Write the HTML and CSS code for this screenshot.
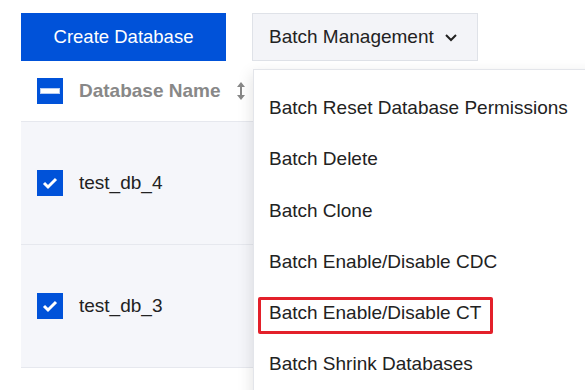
FILE: index.html
```html
<!DOCTYPE html>
<html lang="en">
<head>
  <meta charset="UTF-8">
  <title>Databases</title>
  <link rel="stylesheet" href="styles.css">
</head>
<body>
  <div class="toolbar">
    <button class="btn primary">Create Database</button>
    <button class="btn plain">Batch Management
      <svg class="chev" width="14" height="9" viewBox="0 0 14 9"><path d="M2 2l5 5 5-5" fill="none" stroke="#222" stroke-width="2"/></svg>
    </button>
  </div>

  <div class="table">
    <div class="row head">
      <span class="cb mixed"><i></i></span>
      <span class="col-name">Database Name</span>
      <svg class="sort" width="10" height="20" viewBox="0 0 10 20"><path d="M5 1l4 5H1z M5 19l4-5H1z" fill="#888"/><rect x="4" y="5" width="2" height="10" fill="#888"/></svg>
    </div>
    <div class="row sel">
      <span class="cb checked"><svg width="18" height="18" viewBox="0 0 18 18"><path d="M3 9l4 4 8-8" fill="none" stroke="#fff" stroke-width="3"/></svg></span>
      <span class="db">test_db_4</span>
    </div>
    <div class="row sel">
      <span class="cb checked"><svg width="18" height="18" viewBox="0 0 18 18"><path d="M3 9l4 4 8-8" fill="none" stroke="#fff" stroke-width="3"/></svg></span>
      <span class="db">test_db_3</span>
    </div>
  </div>

  <!-- Batch menu -->
  <ul class="menu">
    <li>Batch Reset Database Permissions</li>
    <li>Batch Delete</li>
    <li>Batch Clone</li>
    <li>Batch Enable/Disable CDC</li>
    <li><span class="mark">Batch Enable/Disable CT</span></li>
    <li>Batch Shrink Databases</li>
  </ul>
</body>
</html>
```

FILE: styles.css
```css
* { margin:0; padding:0; box-sizing:border-box; }
body { font-family: 'Liberation Sans', Arial, sans-serif; background:#fff; color:#222; width:585px; height:390px; overflow:hidden; position:relative; }
.toolbar { display:flex; gap:26px; padding:13px 0 0 21px; }
.btn { height:48px; font-family:inherit; font-size:19px; border:none; cursor:pointer; display:flex; align-items:center; }
.btn.primary { width:205px; justify-content:center; background:#0052d9; color:#fff; font-size:18.5px; }
.btn.plain { width:226px; padding-left:16px; gap:10px; background:#f3f4f8; border:1px solid #dfe2e8; color:#222; }
.chev { margin-top:1px; }
/* Table */
.table { margin-left:21px; }
.row { display:flex; align-items:center; padding-left:16px; border-bottom:1px solid #e6e8ee; }
.row.head { height:61px; background:#fff; }
.row.sel { height:123px; background:#f5f6fa; }
.cb { width:26px; height:26px; background:#0052d9; display:flex; align-items:center; justify-content:center; margin-right:16px; }
.cb.mixed i { display:block; width:18px; height:4px; background:#fff; box-shadow:0 0 0 1px #b8cdf2; }
.col-name { font-weight:bold; font-size:19px; color:#888; }
.sort { margin-left:15px; }
.db { font-size:19px; color:#222; }
/* Dropdown */
.menu { list-style:none; position:absolute; left:253px; top:69px; width:360px; height:340px; background:#fff; border:1px solid #e3e5ea; box-shadow:-2px 4px 14px rgba(0,0,0,0.10); padding-top:12px; }
.menu li { height:51.25px; line-height:51.25px; padding-left:15px; font-size:19px; color:#222; white-space:nowrap; }
.mark { position:relative; }
.mark::after { content:''; position:absolute; left:-11px; right:-12px; top:-5px; bottom:-11px; border:3px solid #e3202a; border-radius:2px; }
```
